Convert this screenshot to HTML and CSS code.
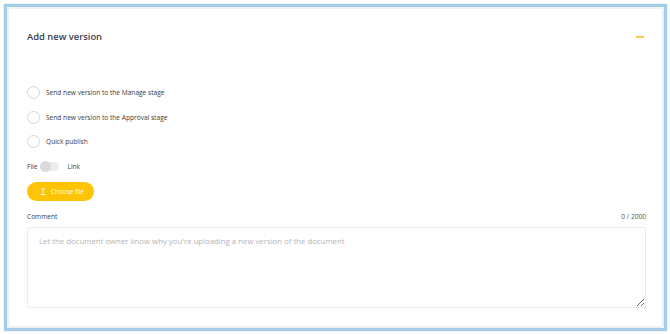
FILE: index.html
```html
<!DOCTYPE html>
<html lang="en">
<head>
    <meta charset="UTF-8">
    <title>Add new version</title>
    <link rel="stylesheet" href="styles.css">
</head>
<body>
    <div class="frame">
        <div class="card">
            <!-- Header -->
            <div class="card-header">
                <h2>Add new version</h2>
                <span class="collapse"></span>
            </div>

            <!-- Destination options -->
            <div class="options">
                <label class="radio"><span class="circle"></span>Send new version to the Manage stage</label>
                <label class="radio"><span class="circle"></span>Send new version to the Approval stage</label>
                <label class="radio"><span class="circle"></span>Quick publish</label>
            </div>

            <!-- File / link switch -->
            <div class="switch-row">
                <span>File</span>
                <span class="switch"><span class="knob"></span></span>
                <span>Link</span>
            </div>

            <button type="button" class="upload">
                <svg width="6" height="8" viewBox="0 0 6 8"><path d="M3 6.2V1M1.2 2.8L3 1L4.8 2.8M0.3 7.5H5.7" fill="none" stroke="#fff" stroke-width="0.9"/></svg>
                Choose file
            </button>

            <!-- Comment -->
            <div class="comment-head">
                <span>Comment</span>
                <span class="count">0 / 2000</span>
            </div>
            <textarea placeholder="Let the document owner know why you're uploading a new version of the document"></textarea>
        </div>
    </div>
</body>
</html>
```

FILE: styles.css
```css
body {
    margin: 0;
    font-family: "Open Sans", Arial, sans-serif;
    background: #ffffff;
    color: #333;
}

/* Blue outline around the whole panel */
.frame {
    margin: 4px 3px 3px 4px;
    height: 321px;
    border: 3px solid #a6cde8;
    box-shadow: 0 0 2px #c6e0f2;
}

.card {
    height: 100%;
    box-sizing: border-box;
    border: 2px solid #efefef;
    border-radius: 3px;
    background: #fff;
    padding: 21px 16px 0 18px;
}

.card-header {
    display: flex;
    justify-content: space-between;
    align-items: center;
}

h2 {
    margin: 0;
    font-size: 9.4px;
    font-weight: 600;
    color: #3a4052;
    line-height: 14px;
}

.collapse {
    width: 8px;
    height: 2px;
    background: #fbc94e;
    margin-right: 2px;
}

.options {
    margin-top: 42px;
    display: flex;
    flex-direction: column;
    gap: 11px;
}

.radio {
    display: flex;
    align-items: center;
    font-size: 6.6px;
    color: #3a3a3a;
    height: 13.5px;
}

.circle {
    width: 11px;
    height: 11px;
    border: 1px solid #d5d5d5;
    border-radius: 50%;
    margin-right: 6px;
    background: #fff;
}

.switch-row {
    display: flex;
    align-items: center;
    margin-top: 12px;
    font-size: 6.6px;
    color: #3a3a3a;
    height: 12px;
}

.switch {
    width: 18px;
    height: 9px;
    border-radius: 5px;
    background: #ececec;
    margin: 0 8px 0 4px;
    position: relative;
}

.knob {
    position: absolute;
    left: -1px;
    top: -1px;
    width: 11px;
    height: 11px;
    border-radius: 50%;
    background: #dadada;
}

.upload {
    display: flex;
    align-items: center;
    gap: 5px;
    margin-top: 9px;
    height: 19px;
    padding: 0 10px 0 13px;
    border: none;
    border-radius: 10px;
    background: #fdc305;
    color: #fff;
    font-family: "Open Sans", Arial, sans-serif;
    font-size: 6.4px;
}

.comment-head {
    display: flex;
    justify-content: space-between;
    margin-top: 11px;
    font-size: 6.6px;
    color: #3a3a3a;
    line-height: 10px;
}

.count {
    color: #555;
}

textarea {
    display: block;
    margin-top: 5px;
    width: 100%;
    height: 81px;
    box-sizing: border-box;
    border: 1px solid #ececec;
    border-radius: 2px;
    padding: 8px 11px;
    font-family: "Open Sans", Arial, sans-serif;
    font-size: 7.8px;
    resize: vertical;
}

textarea::placeholder {
    color: #b4b4b4;
}
```
